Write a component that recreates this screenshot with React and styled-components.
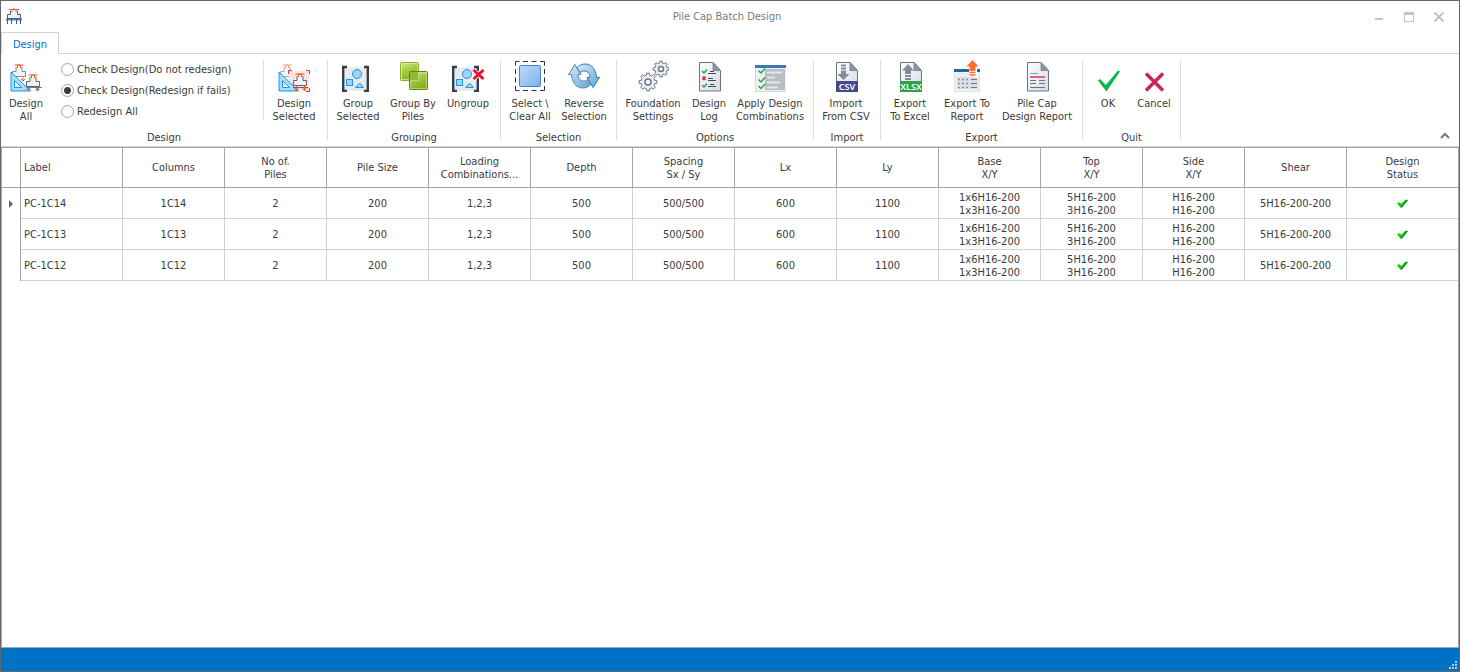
import React, { useState } from 'react';
import styled, { createGlobalStyle } from 'styled-components';

const GlobalStyle = createGlobalStyle`
  * {
    box-sizing: border-box;
  }
  body {
    margin: 0;
    background-color: #fff;
    color: #3b3b3b;
    font-family: 'DejaVu Sans Condensed', 'Noto Sans', sans-serif;
    font-size: 11px;
    line-height: 13px;
  }
  button,
  input {
    font: inherit;
    color: inherit;
  }
`;

const Window = styled.div`
  display: flex;
  flex-direction: column;
  min-height: 100vh;
  border: 1px solid #666;
  background-color: #fff;
`;
const TitleBar = styled.header`
  display: grid;
  grid-template-columns: 1fr auto 1fr;
  align-items: center;
  height: 31px;
  padding: 0 11px 0 5px;
`;
const Title = styled.h1`
  margin: 0;
  font-size: 11px;
  font-weight: normal;
  color: #7a7a7a;
`;
const WindowButtons = styled.div`
  display: flex;
  justify-content: flex-end;
  gap: 14px;
`;
const WindowButton = styled.button`
  display: flex;
  padding: 0;
  border: 0;
  background: none;
`;
const TabBar = styled.nav`
  display: flex;
  height: 22px;
  &::after {
    content: '';
    flex: 1;
    border-bottom: 1px solid #d2d2d2;
  }
`;
const Tab = styled.button`
  width: 58px;
  padding: 2px 0 0;
  border: 1px solid #d2d2d2;
  border-bottom: 0;
  background-color: #fff;
  color: #0072c6;
`;
const Ribbon = styled.section`
  display: flex;
  height: 93px;
  padding-top: 6px;
  border-bottom: 1px solid #d2d2d2;
`;
const Group = styled.div`
  display: flex;
  flex-direction: column;
  justify-content: space-between;
  min-width: ${({ $width }) => ($width ? `${$width}px` : 'auto')};
  padding: 0 2px 2px;
`;
const GroupItems = styled.div`
  display: flex;
  align-items: flex-start;
`;
const Caption = styled.div`
  text-align: center;
`;
const Divider = styled.div`
  flex: none;
  width: 1px;
  height: ${({ $short }) => ($short ? 60 : 80)}px;
  background-color: #dcdcdc;
`;
const ToolButton = styled.button`
  display: flex;
  flex-direction: column;
  align-items: center;
  gap: 5px;
  width: ${({ $width }) => $width}px;
  padding: 0;
  border: 0;
  background: none;
  white-space: pre;
`;
const RadioList = styled.div`
  display: flex;
  flex-direction: column;
  gap: 8px;
  width: 214px;
  padding: 3px 0 0 12px;
`;
const RadioLabel = styled.label`
  display: flex;
  align-items: center;
  gap: 3px;
  white-space: nowrap;
`;
const Radio = styled.input`
  appearance: none;
  width: 13px;
  height: 13px;
  margin: 0;
  border: 1px solid #a6a6a6;
  border-radius: 50%;
  background-color: #fff;
  &:checked {
    background-image: radial-gradient(circle, #3b3b3b 3px, transparent 4px);
  }
`;
const CollapseButton = styled.button`
  align-self: flex-end;
  display: flex;
  margin: 0 9px 7px auto;
  padding: 0;
  border: 0;
  background: none;
`;
const GridArea = styled.main`
  flex: 1;
  border: 1px solid #a6a6a6;
`;
const Table = styled.table`
  width: 100%;
  table-layout: fixed;
  border-collapse: separate;
  border-spacing: 0;
`;
const Col = styled.col`
  width: ${({ $width }) => ($width ? `${$width}px` : 'auto')};
`;
const HeadCell = styled.th`
  height: 40px;
  padding: 0 3px;
  border-right: 1px solid #a6a6a6;
  border-bottom: 1px solid #a6a6a6;
  font-weight: normal;
  text-align: ${({ $align }) => $align || 'center'};
  white-space: pre;
  &:last-child {
    border-right: 0;
  }
`;
const Cell = styled.td`
  height: 31px;
  padding: 1px 3px 0;
  border-right: 1px solid #d2d2d2;
  border-bottom: 1px solid #d2d2d2;
  text-align: ${({ $align }) => $align || 'center'};
  white-space: pre;
  &:last-child {
    border-right: 0;
  }
`;
const IndicatorCell = styled(Cell)`
  padding: 0;
  border-right-color: #a6a6a6;
  border-bottom: 0;
`;
const CellIcon = styled.svg`
  display: block;
  margin: 0 auto;
`;
const StatusBar = styled.footer`
  display: flex;
  align-items: flex-end;
  justify-content: flex-end;
  height: 23px;
  padding: 0 2px 2px;
  background-color: #0072c6;
`;

const Icon = ({ children }) => (
  <svg width="32" height="32" viewBox="0 0 32 32" fill="none" aria-hidden="true">
    {children}
  </svg>
);

const PileCap = ({ x, y, color = '#5d6678', opacity = 1 }) => (
  <g transform={`translate(${x} ${y})`} opacity={opacity}>
    <path d="M4 3v4.500H0.500v5h13v-5H10V3" fill="#f1f2f6" stroke={color} />
    <path d="M2.500 1h9M5.500 1v3M8.500 1v3M7 0v2" stroke="#f4511e" />
  </g>
);

const SetSquare = () => (
  <path
    d="M1 12v19h19.500zM4.500 20.500l7 7h-7z"
    fill="#a9dcf8"
    fillRule="evenodd"
    stroke="#1a98ee"
  />
);

const DesignAllIcon = () => (
  <Icon>
    <PileCap x={2} y={4} color="#858c9b" />
    <path d="M13 17.500v3M11 19l2 2 2-2" stroke="#f4511e" />
    <PileCap x={16} y={14} />
    <path d="M16 27.500h16" stroke="#4b83b0" />
    <path d="M18.500 27v3M27.500 27v3" stroke="#5d6678" strokeWidth="2" />
    <SetSquare />
    <path d="M16.500 29l2 2 2-2M25.500 29l2 2 2-2" stroke="#f4511e" />
  </Icon>
);

const DesignSelectedIcon = () => (
  <Icon>
    <PileCap x={2} y={4} opacity={0.55} />
    <rect x="11" y="11" width="20" height="20" fill="#fbe3e6" />
    <SetSquare />
    <PileCap x={15} y={13} />
    <path d="M15 27.500h15" stroke="#5d6678" />
    <path d="M18.500 26v4M26.500 26v4M16.500 28.500l2 2 2-2M24.500 28.500l2 2 2-2" stroke="#f4511e" />
    <path d="M10.500 14v-3.500H14M28 10.500h3.500V14M31.500 28v3.500H28" stroke="#d9304c" />
  </Icon>
);

const Shapes = () => (
  <>
    <rect x="2" y="7" width="23" height="24" fill="#e9eaec" />
    <circle cx="15" cy="14" r="4.500" fill="#9fd3f6" stroke="#1a98ee" />
    <rect x="4.500" y="19.500" width="6" height="6" fill="#9fd3f6" stroke="#1a98ee" />
    <path d="M17.500 23l-4 4.500h8z" fill="#9fd3f6" stroke="#1a98ee" />
    <path d="M5 7H1.200v24H5M22 7h3.800v24H22" stroke="#333f50" strokeWidth="2.400" />
  </>
);

const GroupIcon = () => (
  <Icon>
    <Shapes />
  </Icon>
);

const UngroupIcon = () => (
  <Icon>
    <Shapes />
    <path d="M21.500 10l10 9M31.500 10l-10 9" stroke="#fff" strokeWidth="4.500" />
    <path d="M21.500 10l10 9M31.500 10l-10 9" stroke="#e8112d" strokeWidth="3" />
  </Icon>
);

const GroupPilesIcon = () => (
  <Icon>
    <defs>
      <linearGradient id="pile" x1="0" y1="0" x2="0.4" y2="1">
        <stop offset="0" stopColor="#d3e98d" />
        <stop offset="0.500" stopColor="#a5c944" />
        <stop offset="1" stopColor="#86b01f" />
      </linearGradient>
    </defs>
    <rect x="3.500" y="2.500" width="18" height="18" rx="1" fill="url(#pile)" stroke="#8db030" />
    <rect x="4.500" y="3.500" width="16" height="16" stroke="#e1f0b0" strokeOpacity="0.700" />
    <rect x="12.500" y="11.500" width="18" height="18" rx="1" fill="url(#pile)" stroke="#5d8a10" />
    <path d="M13 12h8v8h-8z" fill="#93b93a" />
    <path d="M13 20.500h8.500V12" stroke="#bfd97c" />
    <path d="M22 12.500h7.500v16h-16V21" stroke="#e1f0b0" strokeOpacity="0.500" />
  </Icon>
);

const SelectIcon = () => (
  <Icon>
    <defs>
      <linearGradient id="select" x1="0" y1="0" x2="1" y2="1">
        <stop offset="0" stopColor="#b9dcfb" />
        <stop offset="1" stopColor="#7db2ea" />
      </linearGradient>
    </defs>
    <path
      d="M1.500 5.500v-4h4M9 1.500h5M17.500 1.500h5M26 1.500h4.500v4M30.500 9v5M30.500 17.500v5M30.500 26v4.500H26M22.500 30.500h-5M14 30.500H9M5.500 30.500h-4V26M1.500 22.500v-5M1.500 14V9"
      stroke="#20344d"
    />
    <rect x="5.500" y="5.500" width="21" height="21" rx="1" fill="url(#select)" stroke="#4b80c6" />
  </Icon>
);

const ReverseIcon = () => (
  <Icon>
    <defs>
      <linearGradient id="reverse" x1="0" y1="0" x2="1" y2="1">
        <stop offset="0" stopColor="#d6effa" />
        <stop offset="1" stopColor="#5ea3d6" />
      </linearGradient>
    </defs>
    <path
      d="M0.500 14.500L7 4.500l6 10h-3c0 4 2.500 6.500 6 6.500 1.500 0 2.500-.5 3.500-1.500l3.500 4.500c-2 2.500-4.500 4-8 4-6.500 0-11-5-11.500-13.500z"
      fill="url(#reverse)"
      stroke="#5b86ae"
    />
    <path
      d="M31.500 17.500L25 27.500l-6-10h3c0-4-2.500-6.500-6-6.500-1.500 0-2.500.5-3.500 1.500L9 8c2-2.500 4.500-4 8-4 6.500 0 11 5 11.500 13.500z"
      fill="url(#reverse)"
      stroke="#3f76ab"
    />
  </Icon>
);

const gearPath = (cx, cy, outer, inner, teeth) => {
  const points = [];
  const step = (Math.PI * 2) / teeth;
  for (let i = 0; i < teeth; i += 1) {
    [[-0.3, inner], [-0.19, outer], [0.19, outer], [0.3, inner]].forEach(([shift, radius]) => {
      const angle = (i + shift) * step;
      points.push(`${cx + radius * Math.sin(angle)} ${cy - radius * Math.cos(angle)}`);
    });
  }
  return `M${points.join('L')}z`;
};

const GearsIcon = () => (
  <Icon>
    <g fill="#eceef1" stroke="#6c7484">
      <path d={gearPath(11, 22, 9, 7, 8)} />
      <circle cx="11" cy="22" r="3" fill="#fff" strokeWidth="1.500" />
      <path d={gearPath(24, 9, 8, 6, 8)} />
      <circle cx="24" cy="9" r="2.500" fill="#fff" strokeWidth="1.500" />
    </g>
  </Icon>
);

const Page = () => (
  <>
    <defs>
      <linearGradient id="page" x1="0" y1="0" x2="1" y2="1">
        <stop offset="0" stopColor="#fff" />
        <stop offset="1" stopColor="#d5dae2" />
      </linearGradient>
    </defs>
    <path d="M6.500 2.500h13.500l7.500 8v20.500h-21z" fill="url(#page)" stroke="#6c7484" />
    <path d="M20 2.500l7.500 8H20z" fill="#8d95a4" stroke="#6c7484" strokeWidth="0.700" />
  </>
);

const LogIcon = () => (
  <Icon>
    <Page />
    <path d="M9 11l2 2 3-3.500M9 25l2 2 3-3.500" stroke="#17a84b" strokeWidth="1.300" />
    <path d="M9.500 16.500l3 3.500M12.500 16.500l-3 3.500" stroke="#d5143a" strokeWidth="1.300" />
    <path d="M17 11.500h4M15 13.500h8M15 18.500h5M15 20.500h8M17 24.500h4M15 26.500h8" stroke="#3f4856" />
  </Icon>
);

const CombinationsIcon = () => (
  <Icon>
    <rect x="1.500" y="5.500" width="31" height="26" fill="#eff0f2" stroke="#d3d6da" />
    <rect x="1" y="5" width="31" height="3" fill="#3d78b0" />
    <rect x="11" y="9" width="20" height="21" fill="#b8bdc6" />
    <path d="M13 12.500h15M13 17.500h8M13 22.500h13M13 27.500h11" stroke="#e4e7eb" strokeWidth="2" />
    <path d="M4.500 10.500l2.500 2.500 4-4.500M4.500 19.500l2.500 2.500 4-4.500M4.500 26l2.500 2.500 4-4.500" stroke="#28a745" strokeWidth="1.500" />
  </Icon>
);

const FileBand = ({ label, color }) => (
  <>
    <rect x="6" y="21" width="22" height="11" fill={color} />
    <text x="17" y="30" textAnchor="middle" fill="#fff" fontFamily="Noto Sans" fontWeight="600" fontSize="9">
      {label}
    </text>
  </>
);

const CsvIcon = () => (
  <Icon>
    <Page />
    <path d="M11 5.500h5M11 8.500h5" stroke="#858d9b" strokeWidth="2" />
    <path d="M11 10.500h5V14h3.500l-6 6-6-6H11z" fill="#858d9b" />
    <FileBand label="CSV" color="#45488d" />
  </Icon>
);

const XlsxIcon = () => (
  <Icon>
    <Page />
    <path d="M14 4l6 6.500h-3V14h-6v-3.500H8z" fill="#858d9b" />
    <path d="M11 16h6M11 19h6" stroke="#858d9b" strokeWidth="2" />
    <FileBand label="XLSX" color="#2ba24a" />
  </Icon>
);

const ExportReportIcon = () => (
  <Icon>
    <rect x="3.500" y="9.500" width="25" height="22" fill="#eff0f2" stroke="#e0e2e6" />
    <rect x="3" y="9" width="26" height="3" fill="#1f66a5" />
    <rect x="6" y="17" width="21" height="12" fill="#dcdfe3" />
    <path d="M7 19.500h11M7 23.500h11M7 27.500h11" stroke="#8a909b" strokeWidth="1.500" strokeDasharray="2 2" />
    <path d="M20 19.500h6M20 23.500h6M20 27.500h6" stroke="#6c7484" />
    <rect x="18" y="8" width="8" height="9" fill="#fff" />
    <path d="M21.500 0l6 6.500h-3V11h-6V6.500h-3z" fill="#ff6a33" />
    <path d="M18.500 12.500h6M18.500 15h6" stroke="#ff6a33" strokeWidth="1.500" />
  </Icon>
);

const PileReportIcon = () => (
  <Icon>
    <Page />
    <path d="M9 13.500h8" stroke="#4ba7e0" />
    <rect x="9" y="16" width="15" height="2" fill="#e2657c" />
    <path d="M9 20.500h6M18 20.500h6M9 23.500h6M18 23.500h6M9 27.500h15" stroke="#6c7484" />
  </Icon>
);

const OkIcon = () => (
  <Icon>
    <path d="M6 20.500l2-1.500 5.800 6L26 10.500l2 1L14.500 31.500z" fill="#06b84c" />
  </Icon>
);

const CancelIcon = () => (
  <Icon>
    <path d="M8 13.500l17 17M25 13.500l-17 17" stroke="#c9245a" strokeWidth="3.500" />
  </Icon>
);

const AppIcon = () => (
  <svg width="17" height="17" viewBox="0 0 17 17" fill="none" aria-hidden="true">
    <path d="M0 11.500h16" stroke="#3f8fd2" strokeWidth="2" />
    <path d="M4.500 3v3.500h-3v4h13v-4h-3V3" fill="#f1f2f6" stroke="#4b5567" />
    <path d="M1.500 11v5M5.500 11v5M10.500 11v5M14.500 11v5" stroke="#4b5567" />
    <path d="M3 1.500h10M6 1v3M10 1v3M8 0v2" stroke="#f4511e" />
  </svg>
);

const Tick = () => (
  <CellIcon width="11" height="9" viewBox="0 0 11 9" role="img" aria-label="Pass">
    <path d="M1 5l2-1 1.500 1.500L9 1h2L5 8.500H3.500z" fill="#175c17" />
    <path d="M0 4.500L2 3l2 2L8.500 0.500H10L4.500 7.500H3z" fill="#00dc00" />
  </CellIcon>
);

const CurrentRowMark = () => (
  <CellIcon width="4" height="8" viewBox="0 0 4 8" aria-hidden="true">
    <path d="M0 0v8l4-4z" fill="#666" />
  </CellIcon>
);

const designModes = [
  'Check Design(Do not redesign)',
  'Check Design(Redesign if fails)',
  'Redesign All',
];

const groups = [
  {
    caption: 'Grouping',
    width: 172,
    tools: [
      { label: 'Group\nSelected', icon: GroupIcon, width: 56 },
      { label: 'Group By\nPiles', icon: GroupPilesIcon, width: 54 },
      { label: 'Ungroup', icon: UngroupIcon, width: 56 },
    ],
  },
  {
    caption: 'Selection',
    width: 115,
    tools: [
      { label: 'Select \\\nClear All', icon: SelectIcon, width: 54 },
      { label: 'Reverse\nSelection', icon: ReverseIcon, width: 54 },
    ],
  },
  {
    caption: 'Options',
    width: 196,
    tools: [
      { label: 'Foundation\nSettings', icon: GearsIcon, width: 68 },
      { label: 'Design\nLog', icon: LogIcon, width: 44 },
      { label: 'Apply Design\nCombinations', icon: CombinationsIcon, width: 78 },
    ],
  },
  {
    caption: 'Import',
    width: 66,
    tools: [{ label: 'Import\nFrom CSV', icon: CsvIcon, width: 60 }],
  },
  {
    caption: 'Export',
    width: 201,
    tools: [
      { label: 'Export\nTo Excel', icon: XlsxIcon, width: 54 },
      { label: 'Export To\nReport', icon: ExportReportIcon, width: 60 },
      { label: 'Pile Cap\nDesign Report', icon: PileReportIcon, width: 80 },
    ],
  },
  {
    caption: 'Quit',
    width: 97,
    tools: [
      { label: 'OK', icon: OkIcon, width: 46 },
      { label: 'Cancel', icon: CancelIcon, width: 46 },
    ],
  },
];

const columns = [
  'Label',
  'Columns',
  'No of.\nPiles',
  'Pile Size',
  'Loading\nCombinations...',
  'Depth',
  'Spacing\nSx / Sy',
  'Lx',
  'Ly',
  'Base\nX/Y',
  'Top\nX/Y',
  'Side\nX/Y',
  'Shear',
  'Design\nStatus',
];

const pileCaps = ['1C14', '1C13', '1C12'].map(column => ({
  label: `PC-${column}`,
  values: [
    column,
    '2',
    '200',
    '1,2,3',
    '500',
    '500/500',
    '600',
    '1100',
    '1x6H16-200\n1x3H16-200',
    '5H16-200\n3H16-200',
    'H16-200\nH16-200',
    '5H16-200-200',
  ],
}));

const Tool = ({ label, icon: ToolIcon, width }) => (
  <ToolButton type="button" $width={width}>
    <ToolIcon />
    <span>{label}</span>
  </ToolButton>
);

const DesignGroup = () => {
  const [mode, setMode] = useState(designModes[1]);

  return (
    <Group $width={326}>
      <GroupItems>
        <Tool label={'Design\nAll'} icon={DesignAllIcon} width={46} />
        <RadioList>
          {designModes.map(item => (
            <RadioLabel key={item}>
              <Radio type="radio" name="mode" checked={mode === item} onChange={() => setMode(item)} />
              {item}
            </RadioLabel>
          ))}
        </RadioList>
        <Divider $short />
        <Tool label={'Design\nSelected'} icon={DesignSelectedIcon} width={60} />
      </GroupItems>
      <Caption>Design</Caption>
    </Group>
  );
};

const App = () => (
  <>
    <GlobalStyle />
    <Window>
      <TitleBar>
        <AppIcon />
        <Title>Pile Cap Batch Design</Title>
        <WindowButtons>
          <WindowButton type="button" aria-label="Minimize">
            <svg width="16" height="16" fill="#c3c3c3">
              <path d="M3 9h8v2H3z" />
            </svg>
          </WindowButton>
          <WindowButton type="button" aria-label="Maximize">
            <svg width="16" height="16" fill="#c3c3c3" fillRule="evenodd">
              <path d="M2 3h10v10H2zM3 6v6h8V6z" />
            </svg>
          </WindowButton>
          <WindowButton type="button" aria-label="Close">
            <svg width="16" height="16" stroke="#c3c3c3" strokeWidth="2">
              <path d="M2.500 3.500l9 9M11.500 3.500l-9 9" />
            </svg>
          </WindowButton>
        </WindowButtons>
      </TitleBar>
      <TabBar>
        <Tab type="button">Design</Tab>
      </TabBar>
      <Ribbon>
        <DesignGroup />
        <Divider />
        {groups.map(({ caption, width, tools }) => (
          <React.Fragment key={caption}>
            <Group $width={width}>
              <GroupItems>
                {tools.map(tool => (
                  <Tool key={tool.label} {...tool} />
                ))}
              </GroupItems>
              <Caption>{caption}</Caption>
            </Group>
            <Divider />
          </React.Fragment>
        ))}
        <CollapseButton type="button" aria-label="Collapse ribbon">
          <svg width="10" height="7" fill="none" stroke="#7a7a7a" strokeWidth="2">
            <path d="M1 6l4-4 4 4" />
          </svg>
        </CollapseButton>
      </Ribbon>
      <GridArea>
        <Table>
          <colgroup>
            <Col $width={19} />
            {columns.map((name, i) => (
              <Col key={name} $width={i < columns.length - 1 ? 102 : undefined} />
            ))}
          </colgroup>
          <thead>
            <tr>
              <HeadCell aria-label="Current row" />
              {columns.map((name, i) => (
                <HeadCell key={name} scope="col" $align={i === 0 ? 'left' : 'center'}>
                  {name}
                </HeadCell>
              ))}
            </tr>
          </thead>
          <tbody>
            {pileCaps.map(({ label, values }, row) => (
              <tr key={label}>
                <IndicatorCell>{row === 0 && <CurrentRowMark />}</IndicatorCell>
                <Cell $align="left">{label}</Cell>
                {values.map((value, i) => (
                  <Cell key={columns[i + 1]}>{value}</Cell>
                ))}
                <Cell>
                  <Tick />
                </Cell>
              </tr>
            ))}
          </tbody>
        </Table>
      </GridArea>
      <StatusBar>
        <svg width="8" height="8" fill="#c3c9d0" aria-hidden="true">
          <path d="M6 0h2v2H6zM3 3h2v2H3zM6 3h2v2H6zM0 6h2v2H0zM3 6h2v2H3zM6 6h2v2H6z" />
        </svg>
      </StatusBar>
    </Window>
  </>
);

export default App;
